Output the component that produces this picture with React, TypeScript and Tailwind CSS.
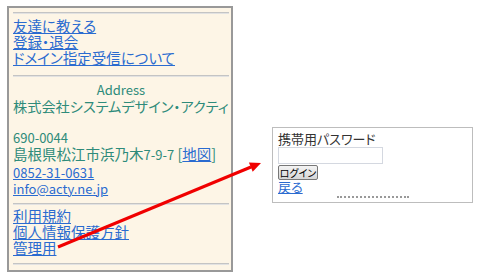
const jp = "font-['Noto_Sans_CJK_JP','Noto_Sans',sans-serif]";

function Rule() {
  return <div className="h-[2px] bg-[#c4c4c4] border-b border-[#e2e2e2]" />;
}

function NavLink({ children }: { children: React.ReactNode }) {
  return (
    <div>
      <a href="#" className="text-[#2a6bd0] underline decoration-1 underline-offset-1">
        {children}
      </a>
    </div>
  );
}

function LeftPanel() {
  return (
    <section className="w-[226px] h-[266px] border-2 border-[#999] bg-[#fdf5e6] pl-[4px] pr-[2px] pt-[4px] text-[14.5px] leading-[16px] [font-feature-settings:'palt']">
      <Rule />
      <div className="pt-[4px] pb-[9px]">
        <NavLink>友達に教える</NavLink>
        <NavLink>登録・退会</NavLink>
        <NavLink>ドメイン指定受信について</NavLink>
      </div>
      <Rule />
      <div className="pt-[5px] text-[#2e8b7a]">
        <div className="text-center text-[13px]">Address</div>
        <div className="text-[14.2px]">株式会社システムデザイン・アクティ</div>
        <div className="h-[16px]" />
        <div className="text-[13px]">690-0044</div>
        <div>
          島根県松江市浜乃木<span className="text-[13px]">7-9-7</span> [
          <a href="#" className="text-[#2a6bd0] underline underline-offset-1">地図</a>]
        </div>
        <div className="pt-[2px] text-[13px]">
          <NavLink>0852-31-0631</NavLink>
          <NavLink>info@acty.ne.jp</NavLink>
        </div>
      </div>
      <div className="pt-[6px]">
        <Rule />
      </div>
      <div className="pt-[3px] pb-[7px]">
        <NavLink>利用規約</NavLink>
        <NavLink>個人情報保護方針</NavLink>
        <NavLink>管理用</NavLink>
      </div>
      <Rule />
    </section>
  );
}

function LoginPanel() {
  return (
    <section className="mt-[121px] w-[201px] h-[76px] border border-[#bdbdbd] bg-white pl-[5px] pt-[3px] text-[13px] leading-[16px] text-[#333] [font-feature-settings:'palt']">
      <div>携帯用パスワード</div>
      <input className="block w-[105px] h-[17px] border border-[#d4d8e0] bg-white" />
      <button className="mt-[1px] block h-[15px] w-[40px] rounded-[2px] border border-[#777] bg-gradient-to-b from-[#f4f4f4] to-[#d6d6d6] text-[10px] leading-[12px] text-black">
        ログイン
      </button>
      <a href="#" className="block text-[#2a6bd0] underline underline-offset-1 leading-[14px]">
        戻る
      </a>
      <div className="ml-[59px] mt-[2px] w-[72px] border-t-2 border-dotted border-[#999]" />
    </section>
  );
}

export default function App() {
  return (
    <div className={`relative w-[480px] h-[280px] bg-white ${jp}`}>
      <div className="flex gap-[39px] pl-[7px] pt-[6px]">
        <LeftPanel />
        <LoginPanel />
      </div>
      <svg className="absolute left-0 top-0 pointer-events-none" width="480" height="280">
        <line x1="58" y1="247" x2="251" y2="167" stroke="#f00000" strokeWidth="3" />
        <polygon points="261,163 252.7,171.8 248.9,162.6" fill="#f00000" />
      </svg>
    </div>
  );
}
